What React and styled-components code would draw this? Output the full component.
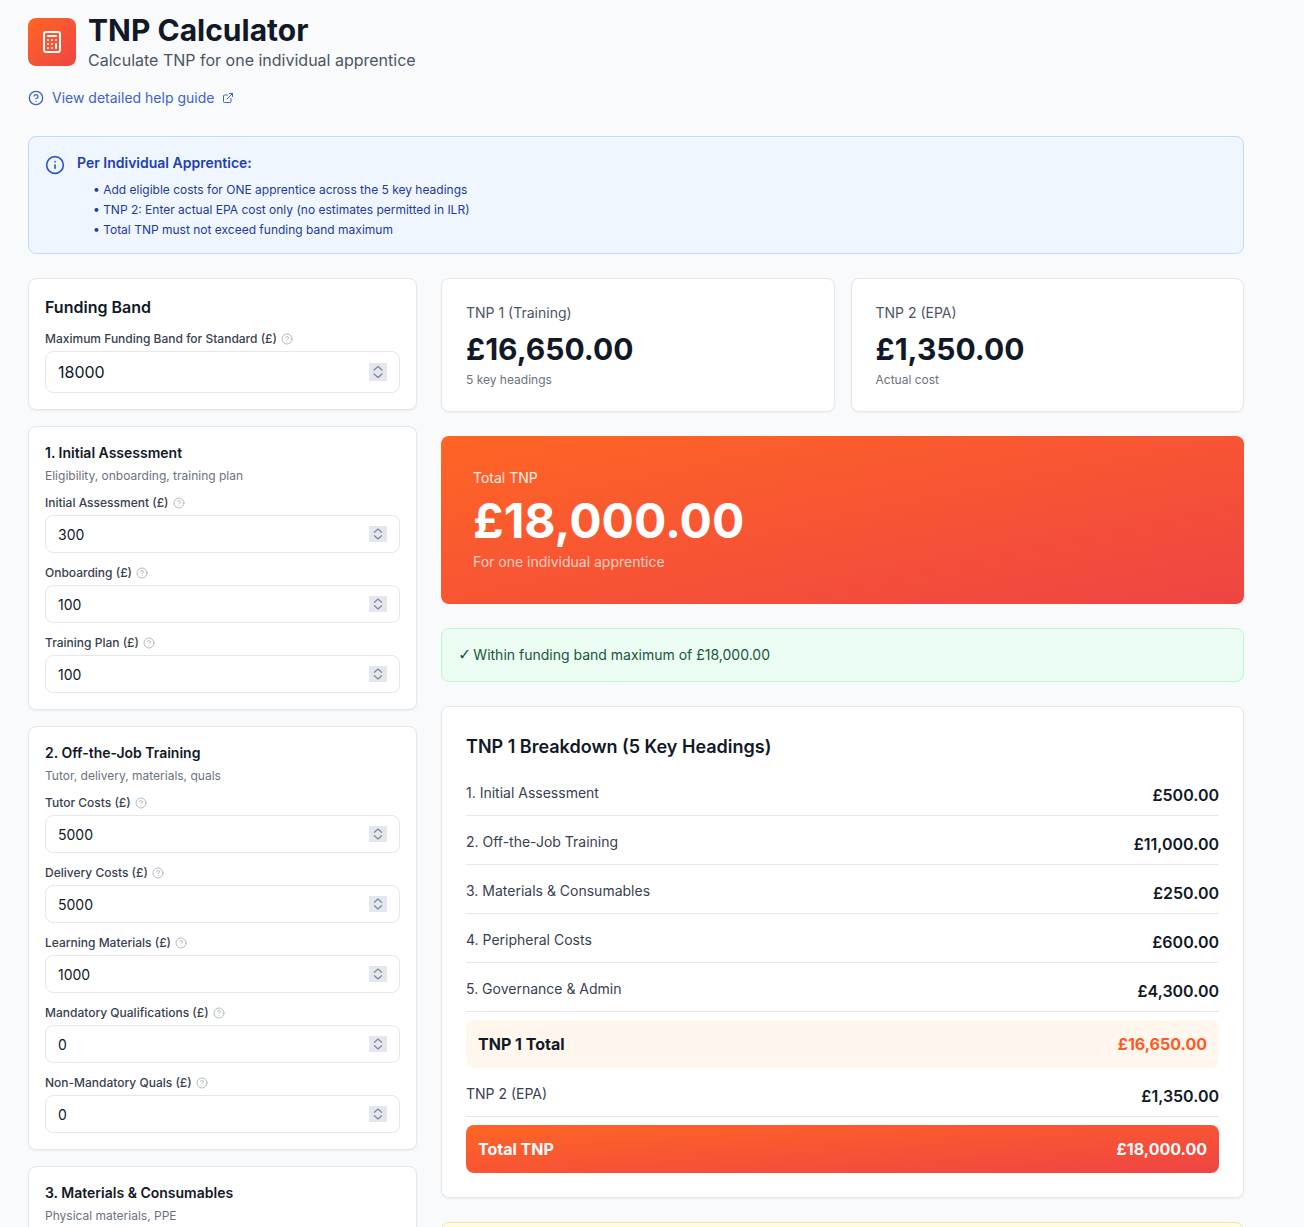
import React from 'react'
import styled, { createGlobalStyle } from 'styled-components'
import { Calculator, CircleHelp, ExternalLink, Info } from 'lucide-react'

const GRADIENT = 'linear-gradient(to bottom right, #ff6524 0%, #ef4444 100%)'

// chevrons for the number input's spin button
const SPIN_ARROWS = `url("data:image/svg+xml,%3Csvg xmlns='http://www.w3.org/2000/svg' viewBox='0 0 18 18' fill='none' stroke='%238189a0' stroke-width='1.4' stroke-linecap='round' stroke-linejoin='round'%3E%3Cpath d='M5 7 9 3.4 13 7'/%3E%3Cpath d='M5 11 9 14.6 13 11'/%3E%3C/svg%3E")`

const GlobalStyle = createGlobalStyle`
  html, body {
    margin: 0;
    height: 100vh;
    overflow: hidden;
    background: #f9fafb;
  }
  body, input {
    font-family: Inter, "Liberation Sans", sans-serif;
    color: #111827;
  }
  * { box-sizing: border-box; }
`

const sections = [
  {
    title: '1. Initial Assessment',
    sub: 'Eligibility, onboarding, training plan',
    fields: [
      ['Initial Assessment (£)', 300],
      ['Onboarding (£)', 100],
      ['Training Plan (£)', 100],
    ],
  },
  {
    title: '2. Off-the-Job Training',
    sub: 'Tutor, delivery, materials, quals',
    fields: [
      ['Tutor Costs (£)', 5000],
      ['Delivery Costs (£)', 5000],
      ['Learning Materials (£)', 1000],
      ['Mandatory Qualifications (£)', 0],
      ['Non-Mandatory Quals (£)', 0],
    ],
  },
  {
    title: '3. Materials & Consumables',
    sub: 'Physical materials, PPE',
    fields: [],
  },
]

const breakdown = [
  ['1. Initial Assessment', '£500.00'],
  ['2. Off-the-Job Training', '£11,000.00'],
  ['3. Materials & Consumables', '£250.00'],
  ['4. Peripheral Costs', '£600.00'],
  ['5. Governance & Admin', '£4,300.00'],
]

function Field({ label, value, big }) {
  return (
    <FieldWrap>
      <Label>
        {label}
        <HintIcon size={12} strokeWidth={1.5} />
      </Label>
      <NumberInput type="number" defaultValue={value} $big={big} />
    </FieldWrap>
  )
}

function App() {
  return (
    <Page>
      <GlobalStyle />
      <Header>
        <LogoBox>
          <Calculator size={24} strokeWidth={2} />
        </LogoBox>
        <div>
          <Title>TNP Calculator</Title>
          <Subtitle>Calculate TNP for one individual apprentice</Subtitle>
        </div>
      </Header>

      <HelpLink>
        <CircleHelp size={16} strokeWidth={2} />
        View detailed help guide
        <ExternalLink size={12} strokeWidth={2} />
      </HelpLink>

      <InfoBox>
        <InfoIcon>
          <Info size={20} strokeWidth={2} />
        </InfoIcon>
        <div>
          <InfoTitle>Per Individual Apprentice:</InfoTitle>
          <InfoList>
            <li>• Add eligible costs for ONE apprentice across the 5 key headings</li>
            <li>• TNP 2: Enter actual EPA cost only (no estimates permitted in ILR)</li>
            <li>• Total TNP must not exceed funding band maximum</li>
          </InfoList>
        </div>
      </InfoBox>

      <Columns>
        <LeftColumn>
          <Card>
            <BandTitle>Funding Band</BandTitle>
            <Field label="Maximum Funding Band for Standard (£)" value={18000} big />
          </Card>
          {sections.map((s) => (
            <Card key={s.title}>
              <SectionTitle>{s.title}</SectionTitle>
              <SectionSub>{s.sub}</SectionSub>
              {s.fields.map(([label, value]) => (
                <Field key={label} label={label} value={value} />
              ))}
            </Card>
          ))}
        </LeftColumn>

        <RightColumn>
          <StatRow>
            <StatCard>
              <StatLabel>TNP 1 (Training)</StatLabel>
              <StatValue>£16,650.00</StatValue>
              <StatSub>5 key headings</StatSub>
            </StatCard>
            <StatCard>
              <StatLabel>TNP 2 (EPA)</StatLabel>
              <StatValue>£1,350.00</StatValue>
              <StatSub>Actual cost</StatSub>
            </StatCard>
          </StatRow>

          <TotalCard>
            <TotalLabel>Total TNP</TotalLabel>
            <TotalValue>£18,000.00</TotalValue>
            <TotalSub>For one individual apprentice</TotalSub>
          </TotalCard>

          <SuccessBox>
            <CheckMark>✓</CheckMark> Within funding band maximum of £18,000.00
          </SuccessBox>

          <BreakdownCard>
            <BreakdownTitle>TNP 1 Breakdown (5 Key Headings)</BreakdownTitle>
            <BreakdownList>
              {breakdown.map(([label, value]) => (
                <Row key={label}>
                  <RowLabel>{label}</RowLabel>
                  <RowValue>{value}</RowValue>
                </Row>
              ))}
              <SubtotalRow>
                <span>TNP 1 Total</span>
                <SubtotalValue>£16,650.00</SubtotalValue>
              </SubtotalRow>
              <Row>
                <RowLabel>TNP 2 (EPA)</RowLabel>
                <RowValue>£1,350.00</RowValue>
              </Row>
              <GrandRow>
                <span>Total TNP</span>
                <span>£18,000.00</span>
              </GrandRow>
            </BreakdownList>
          </BreakdownCard>

          <WarningBox />
        </RightColumn>
      </Columns>
    </Page>
  )
}

const Page = styled.div`
  width: 1216px;
  margin-left: 28px;
  padding-top: 12px;
`

const Header = styled.header`
  display: flex;
  align-items: center;
  gap: 12px;
`

const LogoBox = styled.div`
  width: 48px;
  height: 48px;
  border-radius: 8px;
  background: ${GRADIENT};
  color: #fff;
  display: flex;
  align-items: center;
  justify-content: center;
`

const Title = styled.h1`
  margin: 0;
  font-size: 30px;
  line-height: 36px;
  font-weight: 700;
  color: #111827;
`

const Subtitle = styled.p`
  margin: 0;
  font-size: 16px;
  line-height: 24px;
  color: #4b5563;
`

const HelpLink = styled.a`
  display: inline-flex;
  align-items: center;
  gap: 8px;
  margin-top: 16px;
  font-size: 14px;
  line-height: 20px;
  color: #3f62c8;
`

const InfoBox = styled.section`
  display: flex;
  gap: 12px;
  margin-top: 26px;
  padding: 16px 16px 15px;
  background: #eff6ff;
  border: 1px solid #bfdbfe;
  border-radius: 8px;
`

const InfoIcon = styled.div`
  color: #3358c4;
  height: 20px;
  margin-top: 2px;
`

const InfoTitle = styled.div`
  font-size: 14px;
  line-height: 20px;
  font-weight: 600;
  color: #1e40af;
`

const InfoList = styled.ul`
  list-style: none;
  margin: 9px 0 0 16px;
  padding: 0;
  display: flex;
  flex-direction: column;
  gap: 4px;
  font-size: 12px;
  line-height: 16px;
  color: #1e3a9a;
`

const Columns = styled.div`
  display: grid;
  grid-template-columns: 389px 1fr;
  gap: 24px;
  margin-top: 24px;
  align-items: start;
`

const LeftColumn = styled.div`
  display: flex;
  flex-direction: column;
  gap: 16px;
`

const RightColumn = styled.div`
  display: flex;
  flex-direction: column;
  gap: 24px;
`

const Card = styled.div`
  background: #fff;
  border: 1px solid #e5e7eb;
  border-radius: 8px;
  padding: 16px;
  box-shadow: 0 1px 2px rgba(0, 0, 0, 0.05);
`

const BandTitle = styled.h2`
  margin: 0;
  font-size: 16px;
  line-height: 24px;
  font-weight: 600;
`

const SectionTitle = styled.h3`
  margin: 0;
  font-size: 14px;
  line-height: 20px;
  font-weight: 600;
`

const SectionSub = styled.p`
  margin: 5px 0 -1px;
  font-size: 12px;
  line-height: 16px;
  color: #6b7280;
`

const FieldWrap = styled.div`
  margin-top: 12px;
`

const Label = styled.label`
  display: flex;
  align-items: center;
  gap: 4px;
  margin-bottom: 4px;
  font-size: 12px;
  line-height: 16px;
  font-weight: 500;
  color: #374151;
`

const HintIcon = styled(CircleHelp)`
  color: #9ca3af;
`

const NumberInput = styled.input`
  display: block;
  width: 100%;
  padding: 8px 12px;
  border: 1px solid #e5e7eb;
  border-radius: 8px;
  background: #fff;
  color: #111827;
  font-size: ${(p) => (p.$big ? '16px' : '14px')};
  line-height: ${(p) => (p.$big ? '24px' : '20px')};
  height: ${(p) => (p.$big ? '42px' : '38px')};

  &::-webkit-inner-spin-button,
  &::-webkit-outer-spin-button {
    -webkit-appearance: none;
    appearance: none;
    opacity: 1;
    display: block;
    align-self: center;
    width: 18px;
    height: ${(p) => (p.$big ? '18px' : '16px')};
    background: #e4e7ee ${SPIN_ARROWS} center / 18px 100% no-repeat;
  }
`

const StatRow = styled.div`
  display: grid;
  grid-template-columns: 1fr 1fr;
  gap: 16px;
`

const StatCard = styled(Card)`
  padding: 24px 24px 23px;
`

const StatLabel = styled.div`
  font-size: 14px;
  line-height: 20px;
  color: #4b5563;
`

const StatValue = styled.div`
  margin-top: 8px;
  font-size: 30px;
  line-height: 36px;
  font-weight: 700;
  color: #111827;
`

const StatSub = styled.div`
  margin-top: 5px;
  font-size: 12px;
  line-height: 16px;
  color: #6b7280;
`

const TotalCard = styled.div`
  padding: 32px;
  border-radius: 8px;
  background: ${GRADIENT};
  color: #fff;
`

const TotalLabel = styled.div`
  font-size: 14px;
  line-height: 20px;
  opacity: 0.9;
`

const TotalValue = styled.div`
  margin: 9px 0 7px;
  font-size: 48px;
  line-height: 48px;
  font-weight: 700;
`

const TotalSub = styled.div`
  font-size: 14px;
  line-height: 20px;
  opacity: 0.7;
`

const SuccessBox = styled.div`
  padding: 16px;
  background: #ecfdf3;
  border: 1px solid #bbf7d0;
  border-radius: 8px;
  font-size: 14px;
  line-height: 20px;
  color: #14573a;
`

const CheckMark = styled.span`
  font-family: "DejaVu Sans", sans-serif;
  font-size: 16px;
  font-weight: 700;
  margin-right: -2px;
`

const BreakdownCard = styled(Card)`
  padding: 24px;
`

const BreakdownTitle = styled.h2`
  margin: 2px 0 14px;
  font-size: 18px;
  line-height: 28px;
  font-weight: 600;
`

const BreakdownList = styled.div`
  display: flex;
  flex-direction: column;
  gap: 8px;
`

const Row = styled.div`
  display: flex;
  justify-content: space-between;
  align-items: flex-start;
  padding: 8px 0;
  border-bottom: 1px solid #e5e7eb;
`

const RowLabel = styled.span`
  font-size: 14px;
  line-height: 20px;
  color: #374151;
`

const RowValue = styled.span`
  font-size: 16px;
  line-height: 24px;
  font-weight: 600;
  color: #111827;
`

const SubtotalRow = styled.div`
  display: flex;
  justify-content: space-between;
  padding: 12px;
  border-radius: 8px;
  background: #fff7ed;
  font-size: 16px;
  line-height: 24px;
  font-weight: 700;
  color: #111827;
`

const SubtotalValue = styled.span`
  color: #fb5a26;
`

const GrandRow = styled.div`
  display: flex;
  justify-content: space-between;
  padding: 12px;
  border-radius: 8px;
  background: ${GRADIENT};
  font-size: 16px;
  line-height: 24px;
  font-weight: 700;
  color: #fff;
`

const WarningBox = styled.div`
  height: 120px;
  background: #fffbeb;
  border: 1px solid #fde68a;
  border-radius: 8px;
`

export default App
